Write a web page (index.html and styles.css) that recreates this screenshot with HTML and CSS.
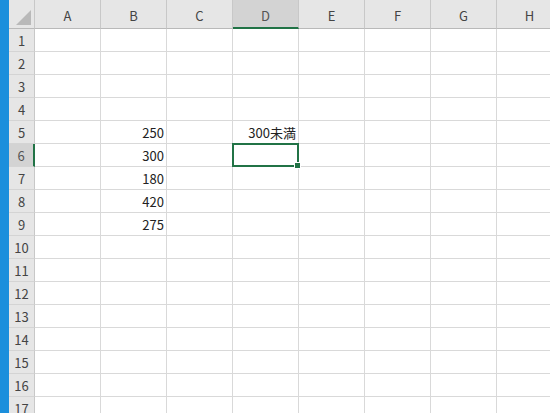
FILE: index.html
```html
<!DOCTYPE html>
<html lang="ja">
<head>
  <meta charset="UTF-8">
  <title>Sheet1</title>
  <link rel="stylesheet" href="styles.css">
</head>
<body>
  <div class="app">
    <div class="side-strip"></div>
    <div class="sheet" id="sheet"></div>
  </div>

  <script>
    const sheet = document.getElementById('sheet');
    const cols = ['A', 'B', 'C', 'D', 'E', 'F', 'G', 'H'];
    const values = { B5: '250', B6: '300', B7: '180', B8: '420', B9: '275', D5: '300未満' };
    const active = { col: 'D', row: 6 };

    let html = '<div class="corner"><span class="corner-tri"></span></div>';
    cols.forEach(c => {
      html += `<div class="col-head${c === active.col ? ' is-active' : ''}">${c}</div>`;
    });
    for (let r = 1; r <= 17; r++) {
      html += `<div class="row-head${r === active.row ? ' is-active' : ''}">${r}</div>`;
      cols.forEach(c => {
        const sel = c === active.col && r === active.row;
        html += `<div class="cell${sel ? ' is-selected' : ''}">${values[c + r] || ''}</div>`;
      });
    }
    sheet.innerHTML = html;
  </script>
</body>
</html>
```

FILE: styles.css
```css
* { box-sizing: border-box; margin: 0; padding: 0; }

body {
  font-family: "Noto Sans CJK JP", "Liberation Sans", sans-serif;
  background: #ffffff;
  overflow: hidden;
}

.app {
  display: flex;
  height: 413px;
}

.side-strip {
  width: 9px;
  flex-shrink: 0;
  background: #1b8fdc;
}

.sheet {
  display: grid;
  grid-template-columns: 26px repeat(8, 66px);
  grid-template-rows: 29px;
  grid-auto-rows: 23px;
  flex-shrink: 0;
}

.corner {
  background: #e6e6e6;
  border-right: 1px solid #c8c8c8;
  border-bottom: 1px solid #b9b9b9;
  position: relative;
}

.corner-tri {
  position: absolute;
  right: 3px;
  bottom: 3px;
  width: 0;
  height: 0;
  border-left: 15px solid transparent;
  border-bottom: 15px solid #b9b9b9;
}

.col-head {
  background: #e6e6e6;
  border-right: 1px solid #c8c8c8;
  border-bottom: 1px solid #b9b9b9;
  color: #444444;
  font-size: 13px;
  display: flex;
  align-items: center;
  justify-content: center;
  padding-top: 3px;
}

.col-head.is-active {
  background: #d3d3d3;
  border-bottom: 2px solid #217346;
  color: #555555;
}

.row-head {
  background: #e6e6e6;
  border-right: 1px solid #c8c8c8;
  border-bottom: 1px solid #d4d4d4;
  color: #444444;
  font-size: 13px;
  display: flex;
  align-items: center;
  justify-content: center;
}

.row-head.is-active {
  background: #d3d3d3;
  border-right: 2px solid #217346;
  color: #555555;
}

.cell {
  border-right: 1px solid #d9d9d9;
  border-bottom: 1px solid #d9d9d9;
  font-size: 13px;
  color: #222222;
  display: flex;
  align-items: center;
  justify-content: flex-end;
  padding-right: 2px;
  position: relative;
}

.cell.is-selected::after {
  content: "";
  position: absolute;
  left: -1px;
  top: -1px;
  right: -1px;
  bottom: -1px;
  border: 2px solid #217346;
}

.cell.is-selected::before {
  content: "";
  position: absolute;
  right: -3px;
  bottom: -3px;
  width: 5px;
  height: 5px;
  background: #217346;
  border: 1px solid #ffffff;
  z-index: 1;
}
```
